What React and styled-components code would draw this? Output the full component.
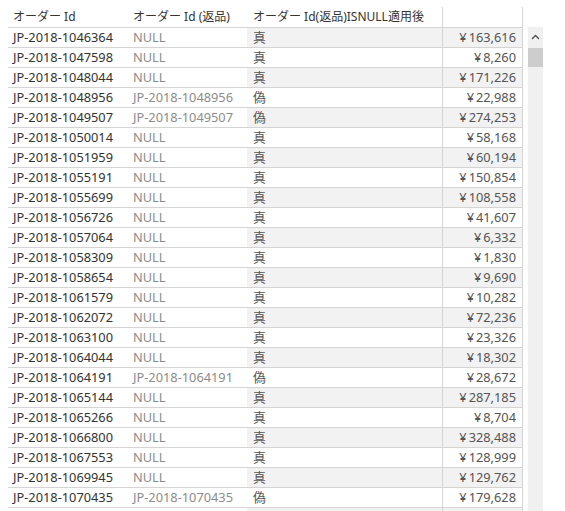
import React from "react";
import styled, { createGlobalStyle } from "styled-components";

const Global = createGlobalStyle`
  html, body { margin: 0; padding: 0; background: #fff; overflow: hidden; }
  body { font-family: "Noto Sans", "Noto Sans CJK JP", sans-serif; }
`;

const rows = [
  ["JP-2018-1046364", null, "真", "163,616"],
  ["JP-2018-1047598", null, "真", "8,260"],
  ["JP-2018-1048044", null, "真", "171,226"],
  ["JP-2018-1048956", "JP-2018-1048956", "偽", "22,988"],
  ["JP-2018-1049507", "JP-2018-1049507", "偽", "274,253"],
  ["JP-2018-1050014", null, "真", "58,168"],
  ["JP-2018-1051959", null, "真", "60,194"],
  ["JP-2018-1055191", null, "真", "150,854"],
  ["JP-2018-1055699", null, "真", "108,558"],
  ["JP-2018-1056726", null, "真", "41,607"],
  ["JP-2018-1057064", null, "真", "6,332"],
  ["JP-2018-1058309", null, "真", "1,830"],
  ["JP-2018-1058654", null, "真", "9,690"],
  ["JP-2018-1061579", null, "真", "10,282"],
  ["JP-2018-1062072", null, "真", "72,236"],
  ["JP-2018-1063100", null, "真", "23,326"],
  ["JP-2018-1064044", null, "真", "18,302"],
  ["JP-2018-1064191", "JP-2018-1064191", "偽", "28,672"],
  ["JP-2018-1065144", null, "真", "287,185"],
  ["JP-2018-1065266", null, "真", "8,704"],
  ["JP-2018-1066800", null, "真", "328,488"],
  ["JP-2018-1067553", null, "真", "128,999"],
  ["JP-2018-1069945", null, "真", "129,762"],
  ["JP-2018-1070435", "JP-2018-1070435", "偽", "179,628"],
];

const Page = styled.div`
  display: flex;
  align-items: flex-start;
  height: 511px;
  overflow: hidden;
  padding: 7px 0 0 8px;
  box-sizing: border-box;
`;

const Table = styled.div`
  width: 515px;
  display: flex;
  flex-direction: column;
`;

const Row = styled.div`
  display: grid;
  grid-template-columns: 120px 119px 196px 80px;
  height: ${(p) => (p.$header ? 21 : 20)}px;
  box-sizing: border-box;
  border-bottom: 1px solid #d4d4d4;
  font-size: ${(p) => (p.$header ? 12 : 12.8)}px;
  flex-shrink: 0;
`;

const Cell = styled.div`
  padding: 0 ${(p) => (p.$right ? "6px" : "0")} 0 ${(p) => (p.$right ? "0" : p.$pad || "5px")};
  text-align: ${(p) => (p.$right ? "right" : "left")};
  color: ${(p) => p.$color || "#333"};
  background: ${(p) => (p.$band ? "#f2f2f2" : "transparent")};
  border-right: ${(p) => (p.$line ? "1px solid #d4d4d4" : "none")};
  white-space: nowrap;
  overflow: hidden;
  line-height: ${(p) => (p.$header ? "20px" : "19px")};
`;

const Yen = styled.span`
  margin-right: 2px;
`;

const Scroll = styled.div`
  margin-top: 20px;
  margin-left: 5px;
  width: 15px;
  height: 490px;
  background: #f0f0f0;
  display: flex;
  flex-direction: column;
  align-items: center;
`;

const Arrow = styled.div`
  height: 20px;
  width: 15px;
  display: flex;
  align-items: center;
  justify-content: center;
`;

const Thumb = styled.div`
  width: 15px;
  height: 19px;
  margin-top: 1px;
  background-color: #cdcdcd;
  background-image: radial-gradient(#c2c2c2 0.6px, transparent 0.7px);
  background-size: 2px 2px;
`;

export default function App() {
  return (
    <>
      <Global />
      <Page>
        <Table>
          <Row $header>
            <Cell $header>オーダー Id</Cell>
            <Cell $header>オーダー Id (返品)</Cell>
            <Cell $header $pad="6px" $line>オーダー Id(返品)ISNULL適用後</Cell>
            <Cell $header $line />
          </Row>
          {rows.map((r, i) => {
            const band = i % 2 === 0;
            return (
              <Row key={i}>
                <Cell>{r[0]}</Cell>
                <Cell $color="#8c8c8c">{r[1] || "NULL"}</Cell>
                <Cell $pad="6px" $band={band} $line $color="#555">{r[2]}</Cell>
                <Cell $right $band={band} $line $color="#555">
                  <Yen>¥</Yen>
                  {r[3]}
                </Cell>
              </Row>
            );
          })}
          <Row>
            <Cell />
            <Cell />
            <Cell $band $line />
            <Cell $band $line />
          </Row>
        </Table>
        <Scroll>
          <Arrow>
            <svg width="9" height="6" viewBox="0 0 9 6">
              <path d="M1 5 L4.5 1.5 L8 5" fill="none" stroke="#505050" strokeWidth="1.4" />
            </svg>
          </Arrow>
          <Thumb />
        </Scroll>
      </Page>
    </>
  );
}
